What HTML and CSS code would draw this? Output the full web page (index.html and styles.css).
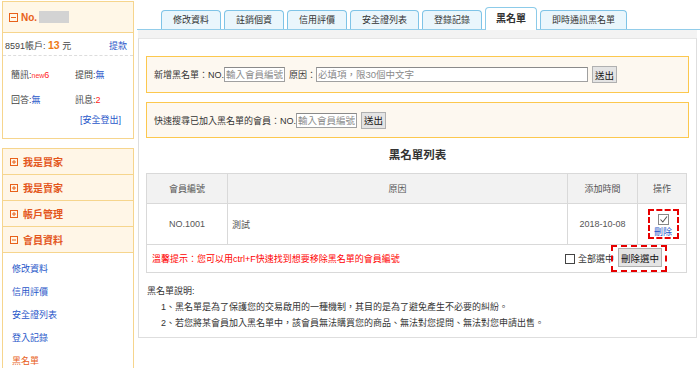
FILE: index.html
```html
<!DOCTYPE html>
<html lang="zh-Hant">
<head>
<meta charset="utf-8">
<title>黑名單</title>
<link rel="stylesheet" href="styles.css">
</head>
<body>
<div class="page">
  <aside class="side">
    <div class="box user">
      <div class="box-hd">
        <svg class="ico-big" width="9" height="9" viewBox="0 0 9 9"><rect x="0.5" y="0.5" width="8" height="8" fill="none" stroke="#e8611a"/><line x1="2" y1="4.5" x2="7" y2="4.5" stroke="#e8611a"/></svg>
        <b class="no">No.</b><span class="redact"></span>
      </div>
      <div class="acct"><span>8591帳戶: <b class="amt">13</b> 元</span><a class="lnk" href="#">提款</a></div>
      <div class="msgs">
        <span>簡訊:<em class="new">new</em><span class="red">6</span></span>
        <span>提問:<a class="lnk" href="#">無</a></span>
        <span>回答:<a class="lnk" href="#">無</a></span>
        <span>訊息:<span class="red">2</span></span>
      </div>
      <div class="logout"><a class="lnk" href="#">[安全登出]</a></div>
    </div>
    <div class="box menu">
      <div class="menu-hd"><svg class="ico" width="8" height="8" viewBox="0 0 8 8"><rect x="0.5" y="0.5" width="7" height="7" fill="none" stroke="#e8611a"/><line x1="2" y1="4" x2="6" y2="4" stroke="#e8611a"/><line x1="4" y1="2" x2="4" y2="6" stroke="#e8611a"/></svg>我是買家</div>
      <div class="menu-hd"><svg class="ico" width="8" height="8" viewBox="0 0 8 8"><rect x="0.5" y="0.5" width="7" height="7" fill="none" stroke="#e8611a"/><line x1="2" y1="4" x2="6" y2="4" stroke="#e8611a"/><line x1="4" y1="2" x2="4" y2="6" stroke="#e8611a"/></svg>我是賣家</div>
      <div class="menu-hd"><svg class="ico" width="8" height="8" viewBox="0 0 8 8"><rect x="0.5" y="0.5" width="7" height="7" fill="none" stroke="#e8611a"/><line x1="2" y1="4" x2="6" y2="4" stroke="#e8611a"/><line x1="4" y1="2" x2="4" y2="6" stroke="#e8611a"/></svg>帳戶管理</div>
      <div class="menu-hd"><svg class="ico" width="8" height="8" viewBox="0 0 8 8"><rect x="0.5" y="0.5" width="7" height="7" fill="none" stroke="#e8611a"/><line x1="2" y1="4" x2="6" y2="4" stroke="#e8611a"/></svg>會員資料</div>
      <ul class="links">
        <li><a class="lnk" href="#">修改資料</a></li>
        <li><a class="lnk" href="#">信用評價</a></li>
        <li><a class="lnk" href="#">安全證列表</a></li>
        <li><a class="lnk" href="#">登入記錄</a></li>
        <li><a class="cur" href="#">黑名單</a></li>
      </ul>
    </div>
  </aside>

  <main class="main">
    <nav class="tabs">
      <a class="tab" href="#">修改資料</a>
      <a class="tab" href="#">註銷個資</a>
      <a class="tab" href="#">信用評價</a>
      <a class="tab" href="#">安全證列表</a>
      <a class="tab" href="#">登錄記錄</a>
      <a class="tab active" href="#">黑名單</a>
      <a class="tab" href="#">即時通訊黑名單</a>
    </nav>
    <div class="panel">
      <div class="fbox">
        <span>新增黑名單：NO.</span><input class="ipt ipt-no" placeholder="輸入會員編號"><span class="lbl">原因：</span><input class="ipt ipt-reason" placeholder="必填項，限30個中文字"><button class="btn">送出</button>
      </div>
      <div class="fbox fbox2">
        <span>快速搜尋已加入黑名單的會員：NO.</span><input class="ipt ipt-no" placeholder="輸入會員編號"><button class="btn">送出</button>
      </div>
      <h2 class="title">黑名單列表</h2>
      <table class="tbl">
        <colgroup><col class="c1"><col class="c2"><col class="c3"><col class="c4"></colgroup>
        <thead>
          <tr><th>會員編號</th><th>原因</th><th>添加時間</th><th>操作</th></tr>
        </thead>
        <tbody>
          <tr class="row">
            <td class="center">NO.1001</td>
            <td>測試</td>
            <td class="center">2018-10-08</td>
            <td class="center"><span class="anno anno-op"><span class="chk checked"><svg width="9" height="9" viewBox="0 0 9 9"><path d="M1.5 4.5 L3.8 7 L8 1.5" fill="none" stroke="#555" stroke-width="1.1"/></svg></span><a class="lnk del" href="#">刪除</a></span></td>
          </tr>
          <tr class="foot">
            <td colspan="4">
              <div class="foot-in">
                <span class="hint">溫馨提示：您可以用ctrl+F快速找到想要移除黑名單的會員編號</span>
                <span class="selall"><span class="chk"></span>全部選中</span><span class="anno anno-btn"><button class="btn btn-del">刪除選中</button></span>
              </div>
            </td>
          </tr>
        </tbody>
      </table>
      <div class="note">
        <p>黑名單說明:</p>
        <p class="ind">1、黑名單是為了保護您的交易啟用的一種機制，其目的是為了避免產生不必要的糾紛。</p>
        <p class="ind">2、若您將某會員加入黑名單中，該會員無法購買您的商品、無法對您提問、無法對您申請出售。</p>
      </div>
    </div>
  </main>
</div>
</body>
</html>
```

FILE: styles.css
```css
* { box-sizing: border-box; }
html, body { margin: 0; padding: 0; background: #fff; }
body {
  font-family: "Liberation Sans", "Noto Sans CJK TC", sans-serif;
  font-size: 9px;
  color: #2e2e2e;
}
a { text-decoration: none; }
.page { display: flex; width: 700px; height: 368px; overflow: hidden; padding-left: 2px; }

/* sidebar */
.side { width: 132px; flex: none; }
.box { border: 1px solid #f6d58d; background: #fff; }
.user { margin-top: 1px; }
.box-hd {
  height: 31px; background: #fff7e7; border-bottom: 1px solid #f6d58d;
  display: flex; align-items: center; padding-left: 6px;
}
.ico-big { margin-right: 3px; }
.no { color: #e8611a; font-size: 10px; font-weight: bold; }
.redact { width: 30px; height: 12px; background: #d3d3d3; margin-left: 2px; }
.acct {
  display: flex; justify-content: space-between; align-items: center;
  height: 20px; margin-top: 3px; padding: 0 6px 0 2px;
  border-bottom: 1px dashed #ddd; color: #444;
}
.amt { color: #ee7a16; font-size: 10.5px; }
.lnk { color: #1f56c9; }
.msgs {
  display: grid; grid-template-columns: 64px 1fr;
  padding: 7px 0 0 8px; line-height: 24px; color: #444;
}
.new { font-style: normal; color: #f33; font-size: 7px; }
.red { color: #f22; }
.logout { text-align: right; padding-right: 12px; line-height: 16px; margin-bottom: 10px; }
.menu { margin-top: 9px; border-bottom: none; height: 230px; }
.menu-hd {
  height: 26px; background: #fff6e7; border-bottom: 1px solid #f6d58d;
  display: flex; align-items: center; padding-left: 7px;
  color: #e3561c; font-weight: bold; font-size: 10px;
}
.menu-hd .ico { margin-right: 5px; }
.links { list-style: none; margin: 0; padding: 5px 0 0 9px; line-height: 23px; }
.cur { color: #e8611a; }

/* main */
.main { flex: 1; margin-left: 3px; min-width: 0; }
.tabs {
  height: 30px; border-bottom: 1px solid #92cdea;
  display: flex; align-items: flex-end; gap: 3px; padding-left: 24px;
}
.tab {
  height: 19px; line-height: 18px; padding: 0 11px;
  border: 1px solid #7fc4e7; border-bottom: none; border-radius: 4px 4px 0 0;
  background: #eaf6fc; color: #333; margin-bottom: 0;
}
.tab.active {
  height: 23px; line-height: 22px; margin-bottom: -1px; background: #fff;
  font-weight: bold; font-size: 10px; padding: 0 10px; border-color: #8ccbe9;
}
.panel {
  margin: 8px 3px 0 1px; border: 1px solid #dedede; border-top-color: #e6e6e6;
  padding: 17px 7px 6px 7px; box-shadow: 0 -8px 0 #f3f3f3;
}
.fbox {
  height: 37px; border: 1px solid #fcc84e; background: #fdf8f0;
  display: flex; align-items: center; padding-left: 7px; color: #333;
}
.fbox2 { height: 36px; margin-top: 9px; }
.ipt {
  font: inherit; font-size: 9.5px; height: 15px; padding: 0 1px;
  border: 1px solid #a0a0a0; border-top-color: #8a8a8a; background: #fff; color: #333;
}
.ipt::placeholder { color: #8a8a8a; }
.ipt-no { width: 61px; }
.ipt-reason { width: 272px; }
.lbl { margin-left: 4px; }
.btn {
  font: inherit; font-size: 9.5px; height: 17px; padding: 0 2px; margin-left: 4px;
  background: #e4e4e4; border: 1px solid #b0b0b0; color: #111;
}
.title {
  margin: 0; height: 35px; line-height: 35px; text-align: center;
  font-size: 11.5px; font-weight: bold; color: #333;
}
.tbl { width: 540px; border-collapse: collapse; table-layout: fixed; }
.c1 { width: 81px; } .c2 { width: 340px; } .c3 { width: 70px; } .c4 { width: 49px; }
.tbl th, .tbl td { border: 1px solid #d9d9d9; padding: 0; }
.tbl th { height: 30px; background: #f2f2f2; font-weight: normal; color: #555; }
.tbl .row td { height: 41px; color: #555; padding-left: 4px; }
.tbl .row td.center { text-align: center; padding-left: 0; }
.anno { border: 2px dashed #e60000; display: inline-flex; }
.anno-op { flex-direction: column; align-items: center; width: 31px; height: 30px; padding-top: 3px; vertical-align: middle; margin-left: 2px; }
.chk { width: 10px; height: 10px; border: 1px solid #444; display: inline-flex; align-items: center; justify-content: center; background: #fff; }
.chk.checked { border-color: #888; width: 11px; height: 11px; }
.del { line-height: 13px; margin-top: 1px; }
.tbl .foot td { height: 28px; }
.foot-in { display: flex; align-items: center; height: 27px; padding-left: 5px; }
.hint { color: #f00; flex: 1; }
.selall { display: inline-flex; align-items: center; gap: 3px; color: #333; margin-right: -3px; }
.anno-btn { height: 27px; padding: 0 3px 0 5px; margin-right: 19px; align-items: flex-start; }
.btn-del { margin: 1px 0 0 0; height: 19px; padding: 0 2px; font-size: 9.5px; }
.note { margin-top: 10px; line-height: 16px; color: #333; }
.note p { margin: 0; padding-left: 1px; }
.note .ind { padding-left: 15px; }
```
